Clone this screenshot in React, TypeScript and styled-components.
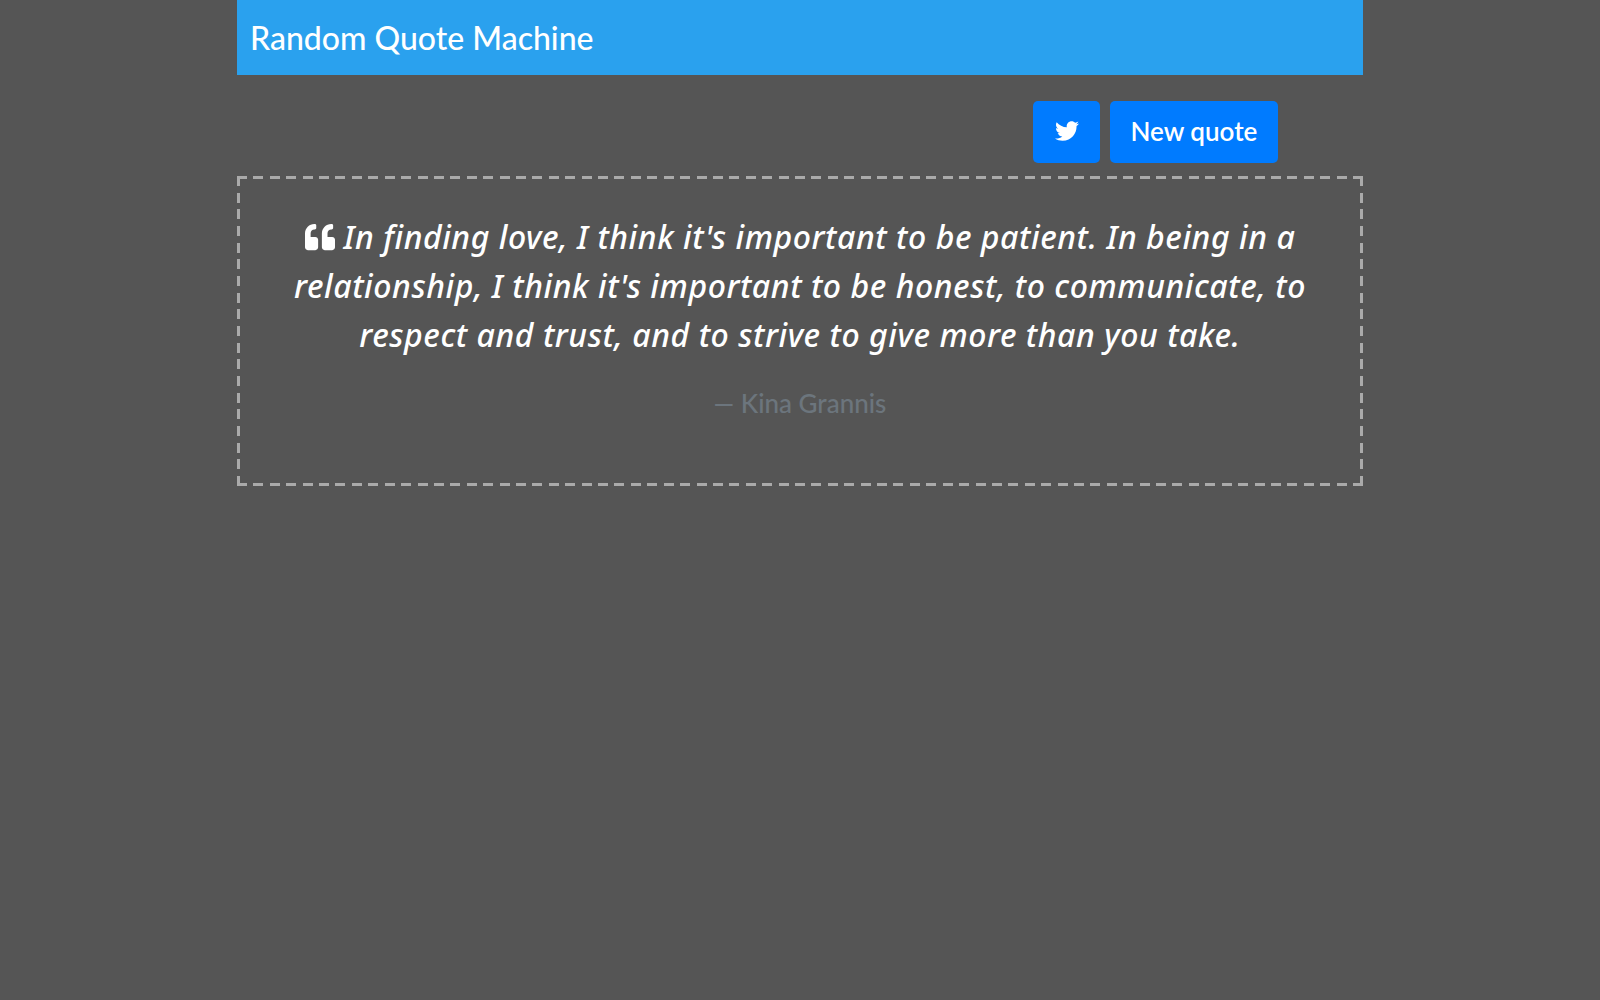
import React from "react";
import styled, { createGlobalStyle } from "styled-components";
import { FaQuoteLeft, FaTwitter } from "react-icons/fa";

const quote =
  "In finding love, I think it's important to be patient. In being in a relationship, I think it's important to be honest, to communicate, to respect and trust, and to strive to give more than you take.";

const App: React.FC = () => {
  return (
    <>
      <GlobalStyle />
      <Wrapper>
        <Header>
          <Title>Random Quote Machine</Title>
        </Header>
        <Toolbar>
          <Btn aria-label="Tweet">
            <FaTwitter size={24} />
          </Btn>
          <Btn $wide>New quote</Btn>
        </Toolbar>
        <QuoteBox>
          <QuoteText>
            <FaQuoteLeft size={30} />
            &nbsp;{quote}
          </QuoteText>
          <Author>— Kina Grannis</Author>
        </QuoteBox>
      </Wrapper>
    </>
  );
};

const GlobalStyle = createGlobalStyle`
  html, body {
    margin: 0;
    height: 100%;
    background: #555555;
  }
  body {
    font-family: "Lato", "Noto Sans", sans-serif;
    color: #fff;
  }
  * {
    box-sizing: border-box;
  }
`;
const Wrapper = styled.div`
  width: 1126px;
  margin: 0 auto;
`;
const Header = styled.header`
  display: flex;
  align-items: center;
  height: 75px;
  padding: 0 13px;
  background: #2aa1ee;
`;
const Title = styled.h1`
  margin: 0;
  font-size: 32px;
  font-weight: 500;
`;
const Toolbar = styled.div`
  display: flex;
  justify-content: flex-end;
  gap: 10px;
  margin-top: 26px;
  padding-right: 85px;
`;
const Btn = styled.button<{ $wide?: boolean }>`
  display: flex;
  align-items: center;
  justify-content: center;
  width: ${(p) => (p.$wide ? "168px" : "67px")};
  height: 62px;
  padding: 0 0 2px;
  border: none;
  border-radius: 5px;
  background: #007bff;
  color: #fff;
  font-family: inherit;
  font-size: 26px;
  font-weight: 600;
  cursor: pointer;
`;
// the browser's own dashed border is too short here: 10px dashes drawn by hand
const QuoteBox = styled.section`
  --dash: #aaaaaa;
  --h: repeating-linear-gradient(90deg, var(--dash) 0 10px, transparent 10px 16.412px);
  --v: repeating-linear-gradient(180deg, var(--dash) 0 10px, transparent 10px 16.667px);
  height: 310px;
  margin-top: 13px;
  padding: 36px 43px 0;
  background:
    var(--h) top / 100% 3px no-repeat,
    var(--h) bottom / 100% 3px no-repeat,
    var(--v) left / 3px 100% no-repeat,
    var(--v) right / 3px 100% no-repeat;
  text-align: center;
`;
const QuoteText = styled.p`
  margin: 0;
  font-family: "Noto Sans", sans-serif;
  font-size: 32px;
  font-style: italic;
  font-weight: 500;
  letter-spacing: 0.56px;
  line-height: 49px;

  svg {
    vertical-align: -3px;
  }
`;
const Author = styled.div`
  margin-top: 25px;
  font-size: 26px;
  font-weight: 500;
  line-height: 39px;
  color: #6c757d;
`;

export default App;
